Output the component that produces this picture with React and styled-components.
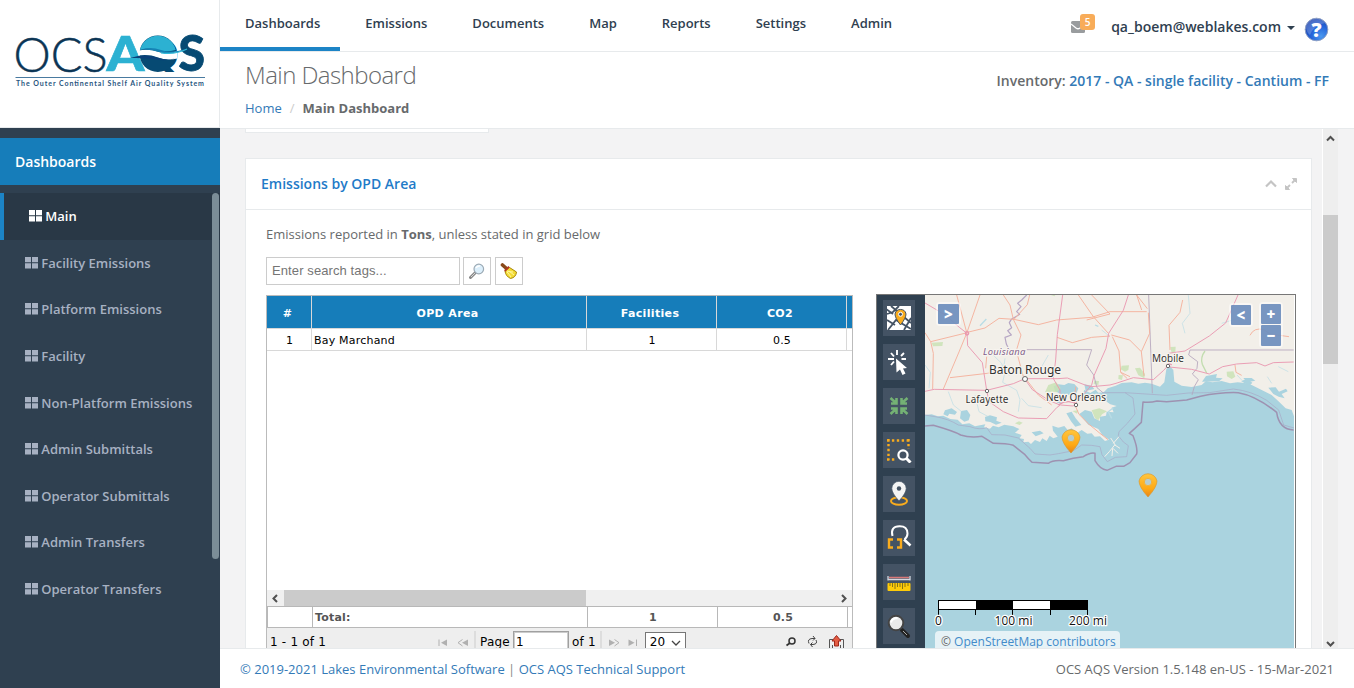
import React from "react";
import styled, { createGlobalStyle } from "styled-components";

const Global = createGlobalStyle`
  * { box-sizing: border-box; }
  html, body { margin: 0; height: 100%; overflow: hidden; }
  body { font-family: "Open Sans", sans-serif; font-size: 13px; color: #676a6c; background: #fff; }
  svg { display: block; flex: none; }
`;

const Shell = styled.div`display: flex; width: 1354px; height: 688px; overflow: hidden;`;
const Sidebar = styled.aside`width: 220px; flex: none; background: #2f4050; display: flex; flex-direction: column;`;
const LogoBox = styled.div`
  height: 128px; background: #fff; padding: 30px 0 0 10px;
  border-right: 1px solid #e7eaec; border-bottom: 1px solid #e7eaec; flex: none;
`;
const SideTitle = styled.div`
  margin-top: 10px; height: 47px; line-height: 47px; padding-left: 15px; flex: none;
  background: #167dba; color: #fff; font-weight: 600; font-size: 14px;
`;
const SideBody = styled.div`display: flex; margin-top: 8px; position: relative;`;
const SideList = styled.nav`flex: 1;`;
const SideThumb = styled.div`
  position: absolute; right: 1px; top: 0; width: 7px; height: 366px; border-radius: 4px; background: #7b8d97;
`;
const SideItem = styled.a`
  display: flex; align-items: center; gap: 3.3px; height: 46.6px; font-weight: 600;
  padding-left: 25px; color: ${(p) => (p.$active ? "#fff" : "#a7b1c2")};
  background: ${(p) => (p.$active ? "#293846" : "transparent")};
  border-left: ${(p) => (p.$active ? "4px solid #1c84c6" : "0")};
`;
const Main = styled.main`flex: 1; min-width: 0; display: flex; flex-direction: column;`;
const TopBar = styled.header`height: 52px; display: flex; border-bottom: 1px solid #e7eaec; flex: none;`;
const Tab = styled.a`
  height: 51px; padding: 0 20px 0 25px; line-height: 47px; font-weight: 600; color: #2f4050;
  border-bottom: 4px solid ${(p) => (p.$active ? "#1c84c6" : "transparent")};
`;
const UserArea = styled.div`
  margin-left: auto; display: flex; align-items: center; height: 54px; padding-right: 25px;
  color: #2f4050; font-size: 14px; font-weight: 600; line-height: 19px; padding-bottom: 1px;
`;
const Mail = styled.div`position: relative; width: 14px; height: 12px; margin: 1px 26px 0 0;`;
const Badge = styled.span`
  position: absolute; left: 9px; top: -7px; width: 15px; height: 16px; border-radius: 3px;
  background: #f8ac59; color: #fff; font-size: 10px; line-height: 16px; text-align: center;
`;
const Caret = styled.i`
  border: 4px solid transparent; border-top-color: #2f4050; border-bottom: 0; margin: 3px 9px 0 6px;
`;
const HelpWrap = styled.div`padding-top: 5px;`;
const Heading = styled.section`
  height: 77px; flex: none; display: flex; justify-content: space-between; padding: 0 25px;
  border-bottom: 1px solid #e7eaec;
`;
const H2 = styled.h2`margin: 7px 0 0; font-size: 24px; line-height: 32px; font-weight: 300; letter-spacing: -0.56px;`;
const Crumbs = styled.div`display: flex; gap: 8px; margin-top: 8px; line-height: 18px; a { color: #337ab7; } i { color: #ccc; font-style: normal; }`;
const Inventory = styled.div`margin-top: 18px; line-height: 22px; font-size: 14px; font-weight: 600; a { color: #337ab7; }`;

const Viewport = styled.div`flex: 1; min-height: 0; overflow: hidden; display: flex; background: #f3f3f4; padding-left: 25px;`;
const Content = styled.div`width: 1067px; flex: none;`;
const StubCard = styled.div`width: 244px; height: 4px; background: #fff; border: 1px solid #e7eaec; border-top: 0;`;
const Card = styled.section`margin-top: 25px; height: 640px; background: #fff; border: 1px solid #e7eaec;`;
const CardHead = styled.div`
  height: 51px; border-bottom: 1px solid #e7eaec; padding: 0 14px 0 15px;
  display: flex; align-items: center; color: #1f7bc8; font-size: 14px; font-weight: 600; line-height: 50px;
`;
const Tools = styled.div`margin-left: auto; display: flex; gap: 8px; align-items: center;`;
const CardBody = styled.div`padding: 14px 0 0 20px;`;
const Note = styled.p`margin: 0; line-height: 20px;`;
const SearchRow = styled.div`display: flex; margin-top: 13px; gap: 4px;`;
const SearchInput = styled.input`
  width: 194px; height: 28px; border: 1px solid #ccc; padding: 0 5px 2px; margin-right: -1px; border-radius: 0; outline: 0;
  font: 13px "Liberation Sans", sans-serif; letter-spacing: .1px; &::placeholder { color: #757575; opacity: 1; }
`;
const IconButton = styled.button`
  width: 28px; height: 28px; border: 1px solid #ccc; background: #fff; padding: 0;
  display: flex; align-items: center; justify-content: center;
`;
const Panels = styled.div`display: flex; margin-top: 9px;`;
const Grid = styled.div`
  width: 587px; height: 500px; margin-top: 1px; border: 1px solid #bbb;
  color: #000; font-family: "DejaVu Sans", sans-serif; font-size: 11px; letter-spacing: .2px;
`;
const GridRow = styled.div`
  display: grid; grid-template-columns: 45px 275px 130px 130px 1fr; overflow: hidden;
  height: ${(p) => (p.$head ? 32 : 23)}px;
  background: ${(p) => (p.$head ? "#167dba" : "#fff")};
  color: ${(p) => (p.$head ? "#fff" : "#000")};
  font-weight: ${(p) => (p.$head ? "bold" : "normal")};
  letter-spacing: ${(p) => (p.$head ? ".35px" : ".2px")};
  border-bottom: ${(p) => (p.$head ? "0" : "1px solid #d8d8d8")};
  border-top: ${(p) => (p.$head ? "0" : "1px solid #d8d8d8")};
  line-height: ${(p) => (p.$head ? 35 : 23)}px;
`;
const Cell = styled.div`
  border-right: 1px solid #d8d8d8; text-align: ${(p) => (p.$left ? "left" : "center")};
  padding-left: ${(p) => (p.$head ? "0" : p.$left ? "2px" : "1px")};
  padding-right: ${(p) => (p.$head ? "3px" : "0")};
  &:last-child { border-right: 0; }
`;
const Blank = styled.div`height: 239px;`;
const HScroll = styled.div`height: 16px; display: flex; background: #f0f0f0; align-items: center; justify-content: space-between; padding-right: 1px;`;
const HThumb = styled.div`width: 302px; height: 16px; background: #cbcbcb; margin-right: auto;`;
const TotalRow = styled.div`
  display: grid; grid-template-columns: 45px 275px 130px 130px 1fr; height: 22px; line-height: 21px;
  border: 1px solid #b8b8b8; border-width: 1px 0 1px 1px; color: #555; font-weight: bold;
  div { border-right: 1px solid #b8b8b8; text-align: center; padding-left: 1px; }
  div:nth-child(2) { text-align: left; padding-left: 2px; }
  div:last-child { border-right: 0; }
`;
const Pager = styled.div`
  height: 40px; background: #eee; display: flex; align-items: flex-start; padding: 3px 8px 0 3px;
  font-size: 12px; line-height: 22px; span { white-space: nowrap; }
`;
const PageInput = styled.div`width: 56px; height: 22px; margin: 0 3px 0 3px; border: 1px solid #a0a0a0; box-shadow: inset 0 0 0 1px #ccc; background: #fff; padding-left: 2px; line-height: 21px;`;
const PageSize = styled.div`
  width: 41px; height: 22px; border: 1px solid #767676; background: #fff; padding: 0 4px; margin-top: 1px; line-height: 19px;
  display: flex; justify-content: space-between; svg { margin-top: 7px; }
`;
const MapPanel = styled.div`width: 420px; height: 500px; margin-left: 23px; border: 1px solid #777; display: flex; background: #fff;`;
const Toolbar = styled.div`width: 48px; background: #2f4050; padding: 5px 6px; display: flex; flex-direction: column; gap: 8px;`;
const Tool = styled.div`width: 32px; height: 36px; background: #445364; display: flex; align-items: center; justify-content: center; flex: none;`;
const MapView = styled.div`width: 369px; position: relative;`;
const MapCtl = styled.div`
  position: absolute; top: ${(p) => p.$top}px; left: ${(p) => p.$left}px; padding: 2px; border-radius: 4px;
  background: rgba(255,255,255,.5); display: flex; flex-direction: column; gap: 1px;
`;
const CtlBtn = styled.div`
  width: ${(p) => p.$w || 20}px; height: ${(p) => p.$h || 20}px; background: rgba(99,134,184,.86); color: #fff; font-weight: 800; font-size: 15px;
  line-height: 20px; text-align: center; border-radius: 1px;
`;
const ScaleArea = styled.div`position: absolute; left: 13px; top: 305px; width: 172px; padding-bottom: 2px;`;
const ScaleBar = styled.div`
  width: 150px; height: 10px; border: 1px solid #000; display: grid; grid-template-columns: 1fr 1fr 1fr 1fr;
  i:nth-child(even) { background: #000; } i:nth-child(odd) { background: #fff; }
`;
const ScaleText = styled.svg`overflow: visible;`;
const Attribution = styled.div`
  position: absolute; left: 10px; top: 336px; width: 185px; height: 22px; border-radius: 4px; padding-left: 6px;
  background: rgba(255,255,255,.7); line-height: 22px; font-size: 12px; white-space: nowrap; color: #666; a { color: #428bca; }
`;
const VScroll = styled.div`
  margin-left: 10px; width: 16px; border-left: 1px solid #fff; background: #eee; display: flex; flex-direction: column; align-items: center;
`;
const VThumb = styled.div`width: 15px; height: 149px; background: #cbcbcb; margin: 68px 0 auto;`;
const Footer = styled.footer`
  height: 40px; flex: none; border-top: 1px solid #e7eaec; display: flex; justify-content: space-between;
  padding: 0 20px; line-height: 41px; span { color: #888; } a { color: #337ab7; }
`;

const Logo = () => (
  <svg width="200" height="62" viewBox="0 0 200 62">
    <defs><clipPath id="base"><rect x="120" y="0" width="60" height="42" /></clipPath></defs>
    <text x="3.500" y="41.800" fontFamily="Lato" fontWeight="300" fontSize="48" fill="#0b3555" stroke="#0b3555" strokeWidth=".5" textLength="94" lengthAdjust="spacingAndGlyphs">OCS</text>
    <text x="96.500" y="41.300" fontFamily="Lato" fontWeight="900" fontSize="47.500" fill="#2cb1d2" stroke="#2cb1d2" strokeWidth=".6" textLength="38" lengthAdjust="spacingAndGlyphs">A</text>
    <g clipPath="url(#base)">
      <text x="129" y="41.300" fontFamily="Lato" fontWeight="900" fontSize="46" fill="#064a73" textLength="40" lengthAdjust="spacingAndGlyphs">Q</text>
    </g>
    <circle cx="147.800" cy="23.700" r="18.300" fill="#064a73" />
    <path d="M130 20A18.300 18.300 0 0 1 165.700 20Q156 22.500 147 20T130 20Z" fill="#2cb1d2" />
    <path d="M128.500 20.500Q139 18.500 149 22T167.500 20.500V28.500Q157 31 148 27.500T128.500 25.500Z" fill="#fff" />
    <text x="168.500" y="41.300" fontFamily="Lato" fontWeight="900" fontSize="49" fill="#064a73" stroke="#064a73" strokeWidth=".8" textLength="26.500" lengthAdjust="spacingAndGlyphs">S</text>
    <path d="M131 19.500Q141 16.500 151 20T176 19Q165 25 151 22.500Q141 19 131 19.500" fill="#1583b5" />
    <path d="M151 22.800Q165 25 177 19" fill="none" stroke="#35bbd9" strokeWidth="1.200" />
    <path d="M120 28Q136 23.500 147 27.500T166 28Q156 31.500 146 29.500T120 28" fill="#0a3f78" />
    <path d="M5.500 47.500H195" stroke="#497aa0" />
    <text x="6" y="56.300" fontFamily="Lato" fontWeight="700" fontSize="7" fill="#27557e" textLength="188">The Outer Continental Shelf Air Quality System</text>
  </svg>
);

const Tiles = () => (
  <svg width="13" height="12" viewBox="0 0 13 12" fill="currentColor">
    <path d="M0 0H6V5.300H0ZM7 0H13V5.300H7ZM0 6.300H6V11.600H0ZM7 6.300H13V11.600H7Z" />
  </svg>
);

const Chevron = ({ d, w = 9, h = 7, color = "#505050", sw = 2 }) => (
  <svg width={w} height={h} viewBox={`0 0 ${w} ${h}`} fill="none" stroke={color} strokeWidth={sw}><path d={d} /></svg>
);

const Help = () => (
  <svg width="25" height="25" viewBox="0 0 25 25">
    <defs><radialGradient id="help" cx=".7" cy=".8" r=".9"><stop stopColor="#4a98ef" /><stop offset=".5" stopColor="#2463d8" /><stop offset="1" stopColor="#1c3fa8" /></radialGradient></defs>
    <circle cx="12.500" cy="12.500" r="11.300" fill="url(#help)" stroke="#8d9fc4" />
    <path d="M2 11A10.500 10.500 0 0 1 21 6Q10 8 6 18Q3 16 2 11" fill="#fff" opacity=".2" />
    <text x="12.500" y="19.500" textAnchor="middle" fontFamily="Open Sans" fontWeight="800" fontSize="20" fill="#fff">?</text>
  </svg>
);

const SearchIcon = () => (
  <svg width="16" height="16" viewBox="0 0 16 16" fill="none">
    <path d="M6.500 9.500L1.500 14.500" stroke="#888" strokeWidth="3" strokeLinecap="round" /><path d="M6 10L2 14" stroke="#d5d5d5" />
    <circle cx="9.800" cy="6" r="4.800" fill="#dceffb" stroke="#9caab5" strokeWidth="1.200" /><path d="M7 5Q8 2.500 11 3" stroke="#fff" strokeWidth="1.500" />
  </svg>
);
const Broom = () => (
  <svg width="18" height="18" viewBox="0 0 18 18">
    <path d="M2.500 3L6.500 6.500" stroke="#8a4a1b" strokeWidth="3.600" strokeLinecap="round" />
    <path d="M5 9L9.500 5.500L16.500 10Q16 15.500 10.500 16.500Q5.500 14 5 9" fill="#f4dc35" stroke="#a98808" />
    <path d="M4.700 9L9 4.700" stroke="#b53722" strokeWidth="1.800" />
    <path d="M7 10Q9 12 11 15M9 9L14 13M7 9Q10 10 13 10" stroke="#fff6a1" fill="none" />
  </svg>
);

const toolIcons = [
  <g><rect x="1" y="1" width="24" height="24" fill="#fff" /><path d="M1 9L7 7L13 1M2 25L10 15L25 24M1 15L9 20M5 1L25 18M18 25L25 13M0 4L7 9" fill="none" stroke="#445364" strokeWidth="1.800" /><path d="M14.500 20Q9 13 9 9A5.600 5.600 0 0 1 20 9Q20 13 14.500 20" fill="#f9ac1d" stroke="#445364" /><circle cx="14.500" cy="9.300" r="2" fill="#445364" stroke="#fff" /></g>,
  <g fill="#fff"><path d="M10 9.500L21 19L17 19.500L19.500 24.500L16.500 26L14 20.500L10.500 23.500Z" /><path d="M2 10H8M15.500 10H20M11 1V6M5 4L8 7.500M18 4L15 7M8 12.500L5 16" stroke="#fff" strokeWidth="1.900" fill="none" /></g>,
  <g stroke="#74b174" strokeWidth="2.600" fill="none"><path d="M4.500 5L10 10M10.500 5V10.500H5M21.500 5L16 10M15.500 5V10.500H21M4.500 21L10 16M5 15.500H10.500V21M21.500 21L16 16M21 15.500H15.500V21" /></g>,
  <g fill="none"><path d="M1 3.500H24M1 22.500H10M2.500 2V23M22.500 2V12" stroke="#f9ac1d" strokeWidth="2.400" strokeDasharray="2.400 2.500" /><circle cx="17" cy="18" r="4.600" stroke="#fff" strokeWidth="2.200" /><path d="M20 21L24.500 25.500" stroke="#fff" strokeWidth="3" /></g>,
  <g><ellipse cx="13" cy="20" rx="8" ry="3.800" fill="none" stroke="#f9ac1d" strokeWidth="2" /><path d="M13 20Q5.800 12 5.800 7.500A7.200 7.200 0 0 1 20.200 7.500Q20.200 12 13 20" fill="#f4f4f4" stroke="#445364" strokeWidth=".7" /><circle cx="13" cy="7.500" r="2.200" fill="#445364" /></g>,
  <g fill="none"><path d="M6.500 11Q4 1.500 13.500 1.200Q21.500 1 21.500 8.500Q21.500 12 18.500 14.500" stroke="#fff" strokeWidth="2" /><path d="M18 14.500L24.500 20.500" stroke="#fff" strokeWidth="2.600" /><path d="M7 14.500H3V22.500H7M11 14.500H15V22.500H11" stroke="#f9ac1d" strokeWidth="2.400" /></g>,
  <g><path d="M2 7V11.500M24 7V11.500M2 10.500H24" stroke="#d3d7df" strokeWidth="1.300" /><path d="M3 8.500H23" stroke="#d87878" strokeWidth="1.500" /><rect x="1.500" y="14" width="23" height="8" rx="1" fill="#fecb09" /><path d="M4 14V17M6.500 14V18M9 14V20M11.500 14V18M14 14V18M16.500 14V20M19 14V18M22 14V17" stroke="#7a6a19" strokeWidth=".9" /></g>,
  <g><path d="M16 17L22 23" stroke="#222" strokeWidth="4" strokeLinecap="round" /><path d="M17 18L21 22" stroke="#aaa" /><circle cx="10" cy="10" r="7.300" fill="#eaeaea" stroke="#444" strokeWidth="2" /><path d="M5 9.500Q6 5 11.500 5" stroke="#fff" strokeWidth="2" fill="none" /></g>,
];

const pinPath = "M0 12Q-9 2-9-4A9.200 9.200 0 0 1 9-4Q9 2 0 12";
const Pin = ({ x, y }) => (
  <g transform={`translate(${x} ${y})`}><path d={pinPath} fill="url(#pin)" stroke="#dc9425" strokeWidth=".6" /><circle cy="-3" r="3.700" fill="#b5cdd0" stroke="#f2b33c" /></g>
);
const halo = { stroke: "#f7f4ef", strokeWidth: 2.4, paintOrder: "stroke", fill: "#333", strokeLinejoin: "round" };

const GulfMap = () => (
  <svg width="369" height="353" viewBox="925 295 369 353" fontFamily="Noto Sans">
    <defs><linearGradient id="pin" x1="0" y1="0" x2="0" y2="1"><stop stopColor="#ffc63e" /><stop offset=".65" stopColor="#ffa914" /><stop offset="1" stopColor="#e5841c" /></linearGradient></defs>
    <rect x="925" y="295" width="369" height="353" fill="#aad3df" />
    <g transform="translate(925 295) scale(.333333)" fill="none" strokeLinejoin="round">
      <path fill="#f2efe9" d="M0 0H1110V372L1100 345L1082 340L1062 320L1040 300L1010 285L980 270L960 264L938 262L915 265L890 258L862 262L843 258L830 270L800 276L770 272L748 260L745 225L735 213L724 222L718 262L705 275L680 266L660 263L640 266L620 262L590 264L572 272L548 280L536 292L520 293L512 284L496 294L478 285L472 300L490 308L535 303L545 320L556 328L575 333L560 338L566 352L545 350L543 362L525 365L525 378L508 370L500 350L480 345L463 357L478 375L490 389L520 402L532 420L552 434L540 438L525 424L509 425L500 415L487 416L470 405L456 414L440 400L428 405L418 393L400 398L382 392L384 407L398 425L385 430L374 422L365 438L352 430L345 441L330 435L318 447L310 440L295 442L297 432L284 430L290 420L270 413L283 402L265 394L238 389L221 397L204 392L195 401L177 397L181 388L165 391L150 394L133 385L112 388L98 374L76 372L55 362L38 364L20 358L0 360Z" />
      <path fill="#aad3df" d="M386 274L400 268L418 270L430 264L448 267L460 280L454 296L430 300L405 296L390 288ZM478 268L500 272L508 282L482 288ZM108 348L126 345L136 360L131 376L118 380L105 370ZM60 346L80 340L96 351L90 359L73 356L68 364L55 358ZM180 366L195 361L216 367L214 377L230 383L213 389L196 381L181 379ZM390 312L412 314L410 326L396 323ZM424 355L440 350L452 370L469 390L451 395L438 379ZM320 412L345 407L356 415L332 424ZM400 398L425 405L414 415ZM831 260L843 243L860 240L876 237L873 248L893 250L882 259ZM948 258L966 252L982 263L973 273ZM955 249L980 249L991 257L965 262ZM1030 278L1052 277L1062 290L1083 281L1088 289L1070 297L1079 310L1061 305L1045 297Z" />
      <path stroke="#b9dce5" strokeWidth="2" d="M204 180L230 205L239 235L233 262L275 286L285 314L280 350M240 190L236 220L253 242M370 180L350 215L338 234M0 210L16 232L12 280M70 290L85 330L110 350M150 300L162 350L190 365M290 310L310 332L350 338M790 0L795 55L772 85L780 115M940 70L890 85M1060 215L1090 230M950 255L936 240M1027 245L1040 265M530 105L555 125" />
      <path stroke="#b9dce5" strokeWidth="4" d="M165 92L184 72M510 90L520 94M560 370L550 350L565 338" />
      <path fill="#cae2b5" opacity=".85" d="M20 143L54 141L52 153L24 154ZM590 212L612 211L610 225L600 230L587 223ZM630 220L645 218L660 237L658 250L640 241ZM736 156L752 155L751 172L740 174ZM370 270L394 262L407 279L396 292L382 290L360 292ZM508 257L522 258L520 270L506 267ZM905 230L925 229L931 245L920 252L906 244ZM270 385L282 379L293 383L284 390ZM500 346L523 340L546 349L531 358L520 376L510 370ZM442 348L460 346L456 356ZM581 240L594 241L591 255L580 252ZM378 0L391 0L388 4Z" />
      <path stroke="#c2ddb0" strokeWidth="4" d="M840 168Q825 188 832 208L845 234" />
    </g>
    <g transform="translate(870 290) scale(.333333)" fill="none" strokeLinejoin="round">
      <path stroke="#b6a6c4" strokeWidth="3.600" d="M470 15L455 30L443 40L453 50L440 65L449 73L424 88L418 98L425 113L413 122L424 135L405 142L409 162L418 180" />
      <path stroke="#b6a6bd" strokeWidth="2.600" d="M470 179H665L650 225L671 255L681 293L700 309M836 15L847 310M960 180H1271M960 180L956 195L983 215L981 235L967 252L985 269L973 290L966 315" />
      <g stroke="#f4b09c" strokeWidth="2.800">
        <path d="M260 15L290 127M165 128L182 155L190 190L188 298M182 155L292 128M330 15L290 130L267 186L220 297M240 263L352 250L385 243M292 127L345 114L387 85L432 88L505 104L560 90L665 82L720 65H830M400 15L420 45L430 88M430 88L453 135L439 182L460 260M432 88L472 44L479 15M350 200L347 235M625 15L670 80L715 130M561 142L607 158L665 142L720 138M665 15L720 72L650 90M832 56L800 15L815 60M835 68L839 130L814 185L779 150L724 135M727 140L747 183L752 247L772 266M752 247L780 260M814 185L822 258M938 30L930 67L897 106L900 180M1095 225L1098 247L1115 256M1140 136Q1152 111 1182 119L1200 132L1257 140M470 270L505 315L545 345M617 290L613 341L627 373L656 402L690 430L714 449" />
      </g>
      <g stroke="#e998b0" strokeWidth="2.800">
        <path d="M165 39L226 75L268 112L291 130L293 167L337 218L350 301L193 298L165 304M350 301L430 281L465 266H564L592 264L645 285L665 290L720 285L738 280L790 263L850 269L880 242L895 226M350 301L357 335L400 365L445 384L530 386L560 353L571 345L610 348L652 300L665 285L672 257M465 268L487 299L538 332L570 345M578 15L562 134L557 210L550 266L570 300V338M672 257L708 175L716 130L760 61L775 15M895 190L945 183L1018 138L1067 99L1104 15M898 231L965 238L1018 252L1058 230L1100 222L1160 218L1185 228L1210 218L1271 216" />
      </g>
      <g stroke="#e998b0" strokeWidth="4"><circle cx="291" cy="130" r="5" /><path d="M565 345Q590 328 617 340M890 226Q898 218 905 225" /></g>
      <path stroke="#9e92b1" strokeWidth="4.500" d="M165 408L190 406Q250 423 272 435Q300 444 336 439L370 460Q410 460 430 466L465 494Q474 505 486 517L535 520Q548 509 580 512Q609 503 640 500Q662 486 675 490V512Q690 538 711 541L738 529H761L780 518L800 492Q804 475 789 437L778 430L794 416L814 397L819 336Q840 339 861 333L890 335L950 330L992 319Q1052 306 1105 308Q1158 317 1220 367Q1227 418 1271 420" />
      <path stroke="#a7a8c6" strokeWidth="2" d="M165 375L195 380Q235 386 265 405L300 410Q330 421 350 413L365 434L405 435L445 444L480 475L495 492L540 495L565 491L610 482L635 465L665 466L690 470L696 494L712 515L736 502L770 500L775 467L760 456L745 437L747 425L772 400L795 372L789 324L765 308H698M765 308L890 316L955 309L1018 308L1090 297Q1145 303 1190 331L1226 360L1241 405L1272 414" />
      <path stroke="#f3f0e9" strokeWidth="3" d="M722 444L735 464L718 485L704 500M730 460L747 440M733 464L750 475M729 475L744 490M728 475L726 498" />
    </g>
    <text x="983" y="355" fontSize="9.500" fontStyle="italic" {...halo} fill="#80608b" textLength="42.500">Louisiana</text>
    <text x="989" y="374" fontSize="12" {...halo} textLength="72">Baton Rouge</text>
    <text x="965.500" y="402.500" fontSize="10" {...halo} textLength="43">Lafayette</text>
    <text x="1046" y="401" fontSize="10" {...halo} textLength="60">New Orleans</text>
    <text x="1152" y="362" fontSize="10" {...halo} textLength="32">Mobile</text>
    <g fill="#fff" stroke="#666"><circle cx="1025" cy="379" r="2.500" /><circle cx="987" cy="391" r="1.700" /><circle cx="1076" cy="405" r="1.700" /><circle cx="1168" cy="366" r="1.700" /></g>
    <Pin x="1071" y="441" /><Pin x="1148" y="485" />
  </svg>
);

const ScaleTicks = () => (
  <ScaleText width="190" height="20" viewBox="0 0 190 20" fontFamily="Open Sans" fontSize="12">
    <path d="M.5 0V5M37.500 0V5M74.500 0V5M112.500 0V5M149.500 0V5" stroke="#000" />
    <g fill="#111" stroke="#fff" strokeWidth="2.500" paintOrder="stroke" strokeLinejoin="round"><text x="-3" y="15">0</text><text x="56.500" y="15" textLength="38">100 mi</text><text x="131" y="15" textLength="38">200 mi</text></g>
  </ScaleText>
);

const arrowPaths = {
  first: ["M1 1.500V8", "M9 1.500V8L3 4.700Z"],
  prev: ["M5.500 1.500L1 4.700L5.500 8", "M11 1.500V8L5 4.700Z"],
  next: ["M5.500 1.500L10 4.700L5.500 8", "M0 1.500V8L6 4.700Z"],
  last: ["M8.500 1.500V8", "M.5 1.500V8L6.500 4.700Z"],
};
const PagerArrow = ({ kind }) => (
  <svg width="11" height="9" viewBox="0 0 11 9">
    <path d={arrowPaths[kind][0]} fill="none" stroke="#b0b0b0" /><path d={arrowPaths[kind][1]} fill="#b0b0b0" />
  </svg>
);
const ArrowPair = styled.div`display: flex; gap: 8px; padding-top: 7px; margin-left: ${(p) => p.$left}px; margin-right: ${(p) => p.$right}px;`;
const Divider = styled.i`width: 2px; height: 18px; background: #ddd; margin-right: ${(p) => p.$right}px; margin-left: ${(p) => p.$left || 0}px;`;
const PagerActions = styled.div`margin-left: auto; display: flex; gap: 11px; padding-top: 4px;`;

const tabs = ["Dashboards", "Emissions", "Documents", "Map", "Reports", "Settings", "Admin"];
const items = ["Main", "Facility Emissions", "Platform Emissions", "Facility", "Non-Platform Emissions", "Admin Submittals", "Operator Submittals", "Admin Transfers", "Operator Transfers"];

export default function App() {
  return (
    <Shell>
      <Global />
      <Sidebar>
        <LogoBox><Logo /></LogoBox>
        <SideTitle>Dashboards</SideTitle>
        <SideBody>
          <SideList>{items.map((t, i) => <SideItem key={t} $active={i === 0}><Tiles />{t}</SideItem>)}</SideList>
          <SideThumb />
        </SideBody>
      </Sidebar>
      <Main>
        <TopBar>
          {tabs.map((t, i) => <Tab key={t} $active={i === 0}>{t}</Tab>)}
          <UserArea>
            <Mail>
              <svg width="14" height="12" viewBox="0 0 14 12"><rect width="14" height="12" rx="1.500" fill="#999c9e" /><path d="M0 3L5 7Q7 8.500 9 7L14 3" fill="none" stroke="#fff" strokeWidth="1.300" /></svg>
              <Badge>5</Badge>
            </Mail>
            qa_boem@weblakes.com<Caret /><HelpWrap><Help /></HelpWrap>
          </UserArea>
        </TopBar>
        <Heading>
          <div><H2>Main Dashboard</H2><Crumbs><a>Home</a><i>/</i><b>Main Dashboard</b></Crumbs></div>
          <Inventory>Inventory: <a>2017 - QA - single facility - Cantium - FF</a></Inventory>
        </Heading>
        <Viewport>
          <Content>
            <StubCard />
            <Card>
              <CardHead>
                Emissions by OPD Area
                <Tools>
                  <Chevron d="M1 7.500L6 2.500L11 7.500" w={12} h={10} color="#c4c4c4" sw={2.2} />
                  <svg width="12" height="12" viewBox="0 0 12 12" fill="#c4c4c4" stroke="#c4c4c4"><path d="M7.500 .5H11.500V4.500ZM.5 7.500V11.500H4.500Z" /><path d="M10 2L7 5M5 7L2 10" strokeWidth="1.800" /></svg>
                </Tools>
              </CardHead>
              <CardBody>
                <Note>Emissions reported in <b>Tons</b>, unless stated in grid below</Note>
                <SearchRow><SearchInput placeholder="Enter search tags..." /><IconButton><SearchIcon /></IconButton><IconButton><Broom /></IconButton></SearchRow>
                <Panels>
                  <Grid>
                    <GridRow $head><Cell $head>#</Cell><Cell $head>OPD Area</Cell><Cell $head>Facilities</Cell><Cell $head>CO2</Cell><Cell $head /></GridRow>
                    <GridRow><Cell>1</Cell><Cell $left>Bay Marchand</Cell><Cell>1</Cell><Cell>0.5</Cell><Cell /></GridRow>
                    <Blank />
                    <HScroll>
                      <Chevron d="M10 1L6.500 4.500L10 8" w={17} h={9} />
                      <HThumb />
                      <Chevron d="M6 1L9.500 4.500L6 8" w={15} h={9} />
                    </HScroll>
                    <TotalRow><div /><div>Total:</div><div>1</div><div>0.5</div><div /></TotalRow>
                    <Pager>
                      <span>1 - 1 of 1</span>
                      <ArrowPair $left={112} $right={6}><PagerArrow kind="first" /><PagerArrow kind="prev" /></ArrowPair>
                      <Divider $right={4} /><span>Page</span><PageInput>1</PageInput><span>of 1</span>
                      <Divider $left={4} $right={7} />
                      <ArrowPair $left={0} $right={6}><PagerArrow kind="next" /><PagerArrow kind="last" /></ArrowPair>
                      <PageSize>20<Chevron d="M1 1L5 5L9 1" w={10} h={7} color="#444" sw={1.3} /></PageSize>
                      <PagerActions>
                        <svg width="11" height="13" viewBox="0 0 11 13" fill="none" stroke="#333"><circle cx="7" cy="6" r="3" strokeWidth="1.500" /><path d="M5 8L1.500 10.500" strokeWidth="1.800" /></svg>
                        <svg width="11" height="13" viewBox="0 0 11 13" fill="none" stroke="#444"><path d="M2 8.500Q0 4 5 3.500H8M6 1L8 3.500L6 5.500M9 5Q11 9 6 9.500H3.500M5.500 7.500L3.500 9.500L5.500 12" /></svg>
                        <svg width="15" height="16" viewBox="0 0 15 16"><path d="M4 4.500H.5V16M11 4.500H14.500V16M3.500 10V16M11.500 10V16" fill="none" stroke="#555" /><path d="M7.500 .5L12 6H9.500V11H5.500V6H3Z" fill="#e35c43" stroke="#9d271b" /></svg>
                      </PagerActions>
                    </Pager>
                  </Grid>
                  <MapPanel>
                    <Toolbar>{toolIcons.map((ic, i) => <Tool key={i}><svg width="26" height="26" viewBox="0 0 26 26">{ic}</svg></Tool>)}</Toolbar>
                    <MapView>
                      <GulfMap />
                      <MapCtl $left={11} $top={7}><CtlBtn $w={21}>&gt;</CtlBtn></MapCtl>
                      <MapCtl $left={304} $top={8}><CtlBtn>&lt;</CtlBtn></MapCtl>
                      <MapCtl $left={334} $top={7}><CtlBtn>+</CtlBtn><CtlBtn $h={21}>−</CtlBtn></MapCtl>
                      <ScaleArea><ScaleBar><i /><i /><i /><i /></ScaleBar><ScaleTicks /></ScaleArea>
                      <Attribution>© <a>OpenStreetMap contributors</a></Attribution>
                    </MapView>
                  </MapPanel>
                </Panels>
              </CardBody>
            </Card>
          </Content>
          <VScroll>
            <Chevron d="M1 11.500L4.500 8L8 11.500" h={18} />
            <VThumb />
            <Chevron d="M1 12L4.500 15.500L8 12" h={18} />
          </VScroll>
        </Viewport>
        <Footer>
          <div><a>© 2019-2021 Lakes Environmental Software</a> <span>|</span> <a>OCS AQS Technical Support</a></div>
          <div>OCS AQS Version 1.5.148 en-US - 15-Mar-2021</div>
        </Footer>
      </Main>
    </Shell>
  );
}
